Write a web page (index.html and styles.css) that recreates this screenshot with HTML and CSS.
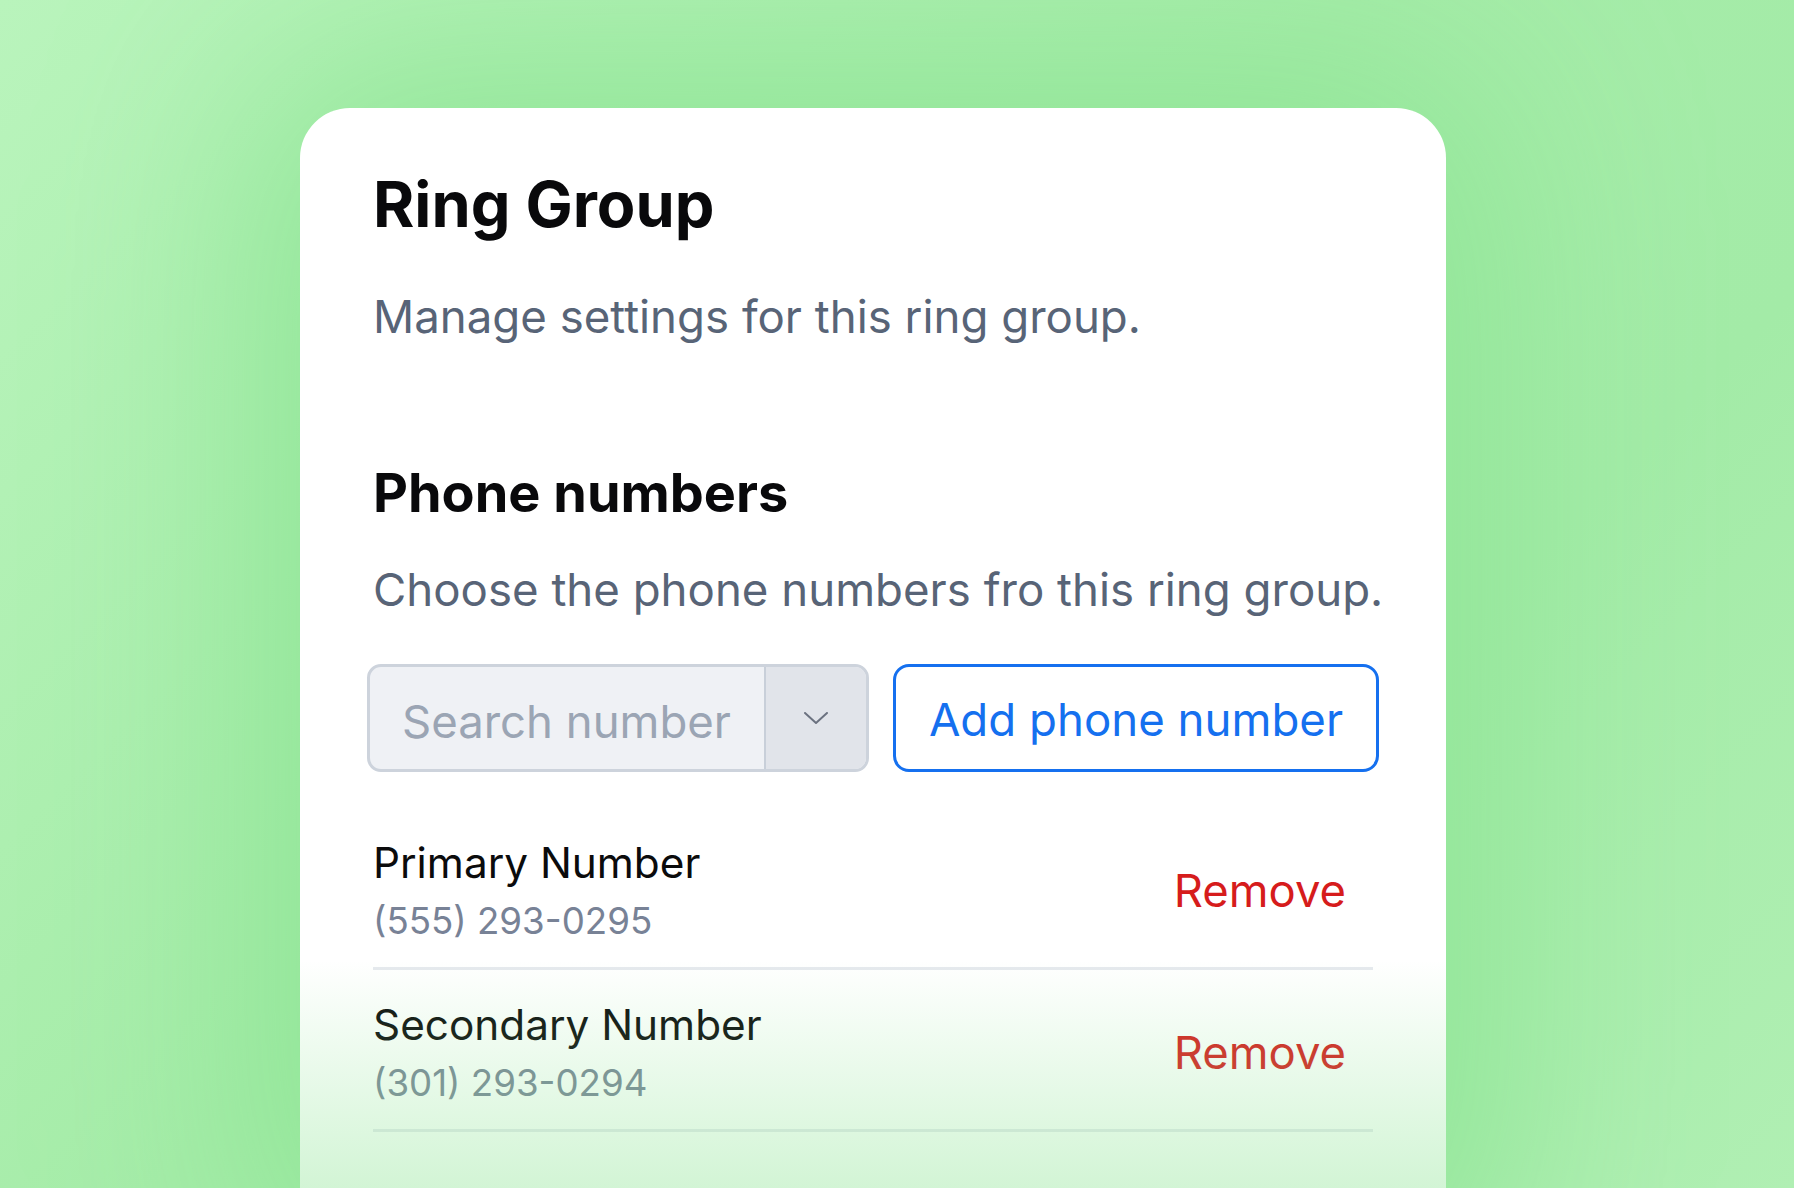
FILE: index.html
```html
<!DOCTYPE html>
<html lang="en">
<head>
    <meta charset="UTF-8">
    <meta name="viewport" content="width=device-width, initial-scale=1.0">
    <title>Ring Group</title>
    <link rel="stylesheet" href="styles.css">
</head>
<body>
    <div class="card">
        <h1>Ring Group</h1>
        <p class="lead">Manage settings for this ring group.</p>

        <h2>Phone numbers</h2>
        <p class="lead">Choose the phone numbers fro this ring group.</p>

        <div class="controls">
            <div class="search">
                <input type="text" placeholder="Search number">
                <span class="toggle">
                    <svg width="24" height="12" viewBox="0 0 24 12" fill="none">
                        <path d="M1 1l11 10L23 1" stroke="#6b7280" stroke-width="2" stroke-linecap="round" stroke-linejoin="round"/>
                    </svg>
                </span>
            </div>
            <button class="add-btn">Add phone number</button>
        </div>

        <ul class="numbers">
            <li class="number-row">
                <div>
                    <div class="number-name">Primary Number</div>
                    <div class="number-value">(555) 293-0295</div>
                </div>
                <a href="#" class="remove">Remove</a>
            </li>
            <li class="number-row">
                <div>
                    <div class="number-name">Secondary Number</div>
                    <div class="number-value">(301) 293-0294</div>
                </div>
                <a href="#" class="remove">Remove</a>
            </li>
        </ul>

        <div class="fade"></div>
    </div>
</body>
</html>
```

FILE: styles.css
```css
html, body {
    height: 100%;
}

body {
    font-family: Inter, "Noto Sans", sans-serif;
    margin: 0;
    padding: 108px 0 0 300px;
    overflow: hidden;
    background: linear-gradient(135deg, #b9f4bc 0%, #a6eca9 45%, #a3eba7 70%, #b0efb3 100%);
}

.card {
    position: relative;
    box-sizing: border-box;
    width: 1146px;
    height: 1140px;
    padding: 59px 73px 0;
    background: #fff;
    border-radius: 50px;
    box-shadow: 0 0 220px 40px #8fe596;
}

h1 {
    margin: 0;
    font-size: 63px;
    font-weight: 700;
    line-height: 1.2;
    color: #09090b;
}

h2 {
    margin: 113px 0 0;
    font-size: 54px;
    font-weight: 700;
    line-height: 1.2;
    color: #09090b;
}

.lead {
    margin: 42px 0 0;
    font-size: 45.6px;
    line-height: 1.4;
    color: #586477;
    white-space: nowrap;
}

h2 + .lead {
    margin-top: 32px;
}

.controls {
    display: flex;
    gap: 24px;
    margin: 42px -6px 0;
}

.search {
    display: flex;
    box-sizing: border-box;
    width: 502px;
    height: 108px;
    border: 3px solid #cdd3dc;
    border-radius: 14px;
    background: #eff1f5;
    overflow: hidden;
}

.search input {
    flex: 1;
    min-width: 0;
    border: none;
    outline: none;
    background: transparent;
    padding: 6px 0 0 32px;
    font-family: inherit;
    font-size: 45.5px;
    color: #333;
}

.search input::placeholder {
    color: #9ba5b4;
}

.toggle {
    display: flex;
    align-items: center;
    justify-content: center;
    width: 100px;
    border-left: 2px solid #c8cfd9;
    background: #e1e4ea;
}

.add-btn {
    box-sizing: border-box;
    width: 486px;
    height: 108px;
    padding: 2px 0 0;
    border: 3px solid #1570ef;
    border-radius: 16px;
    background: #fff;
    color: #1570ef;
    font-family: inherit;
    font-size: 45.6px;
    cursor: pointer;
}

.numbers {
    list-style: none;
    margin: 36px 0 0;
    padding: 0;
}

.number-row {
    display: flex;
    align-items: center;
    justify-content: space-between;
    padding: 28px 27px 22px 0;
    border-bottom: 3px solid #e6e9ee;
}

.number-name {
    font-size: 42.3px;
    line-height: 1.26;
    color: #0b0b0c;
}

.number-value {
    margin-top: 8px;
    font-size: 36.7px;
    line-height: 1.3;
    color: #788296;
}

.remove {
    font-size: 45.4px;
    color: #d61c1c;
    text-decoration: none;
}

.fade {
    position: absolute;
    left: 0;
    right: 0;
    top: 852px;
    bottom: 0;
    background: linear-gradient(rgba(143, 229, 150, 0), rgba(143, 229, 150, 0.4) 228px, rgba(143, 229, 150, 0.5));
}
```
